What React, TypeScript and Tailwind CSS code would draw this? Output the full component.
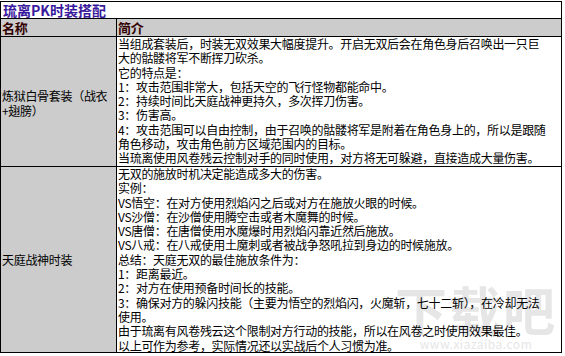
import React from "react";

const row1 = [
  "当组成套装后，时装无双效果大幅度提升。开启无双后会在角色身后召唤出一只巨",
  "大的骷髅将军不断挥刀砍杀。",
  "它的特点是：",
  "1：攻击范围非常大，包括天空的飞行怪物都能命中。",
  "2：持续时间比天庭战神更持久，多次挥刀伤害。",
  "3：伤害高。",
  "4：攻击范围可以自由控制，由于召唤的骷髅将军是附着在角色身上的，所以是跟随",
  "角色移动，攻击角色前方区域范围内的目标。",
  "当琉离使用风卷残云控制对手的同时使用，对方将无可躲避，直接造成大量伤害。",
];

const row2 = [
  "无双的施放时机决定能造成多大的伤害。",
  "实例：",
  "VS悟空：在对方使用烈焰闪之后或对方在施放火眼的时候。",
  "VS沙僧：在沙僧使用腾空击或者木魔舞的时候。",
  "VS唐僧：在唐僧使用水魔爆时用烈焰闪靠近然后施放。",
  "VS八戒：在八戒使用土魔刺或者被战争怒吼拉到身边的时候施放。",
  "总结：天庭无双的最佳施放条件为：",
  "1：距离最近。",
  "2：对方在使用预备时间长的技能。",
  "3：确保对方的躲闪技能（主要为悟空的烈焰闪，火魔斩，七十二斩），在冷却无法",
  "使用。",
  "由于琉离有风卷残云这个限制对方行动的技能，所以在风卷之时使用效果最佳。",
  "以上可作为参考，实际情况还以实战后个人习惯为准。",
];

function Lines({ lines }: { lines: string[] }) {
  return (
    <div className="relative z-10">
      {lines.map((l, i) => (
        <div key={i} className="whitespace-nowrap">
          {l}
        </div>
      ))}
    </div>
  );
}

export default function App() {
  return (
    <div
      className="relative w-[565px] h-[356px] bg-white text-black overflow-hidden"
      style={{ fontFamily: '"Noto Sans CJK SC", "Noto Sans", sans-serif' }}
    >
      <div className="pt-[1px] pl-0">
        <div className="w-[562px] border border-black">
          <div className="h-[17px] border-b border-black pl-[2px] text-[14px] leading-[17px] font-bold text-[#3a1a9c]">
            琉离PK时装搭配
          </div>
          <div className="grid grid-cols-[116px_1fr] text-[12px] leading-[14.3px] tracking-[-0.3px]">
            <div className="h-[18px] bg-[#cccccc] border-r border-b border-black pl-[1px] text-[13px] leading-[18px] font-bold text-[#330000]">
              名称
            </div>
            <div className="h-[18px] bg-[#cccccc] border-b border-black pl-[1px] text-[13px] leading-[18px] font-bold text-[#330000]">
              简介
            </div>

            <div className="bg-[#cccccc] border-r border-b border-black pl-[1px] flex flex-col justify-center pt-[4px]">
              <div>炼狱白骨套装（战衣</div>
              <div>+翅膀）</div>
            </div>
            <div className="h-[130px] border-b border-black pl-[1px]">
              <Lines lines={row1} />
            </div>

            <div className="bg-[#cccccc] border-r border-black pl-[1px] flex flex-col justify-center pt-[2px]">
              <div>天庭战神时装</div>
            </div>
            <div className="relative h-[185px] pl-[1px]">
              <Lines lines={row2} />
              <div className="absolute right-[4px] bottom-[2px] flex flex-col items-center text-[#e6e6e6] z-0 select-none">
                <div className="text-[52px] leading-[58px] font-bold tracking-[2px]">下载吧</div>
                <div className="text-[12px] leading-[12px] tracking-[0.5px]">www.xiazaiba.com</div>
              </div>
            </div>
          </div>
        </div>
      </div>
    </div>
  );
}
